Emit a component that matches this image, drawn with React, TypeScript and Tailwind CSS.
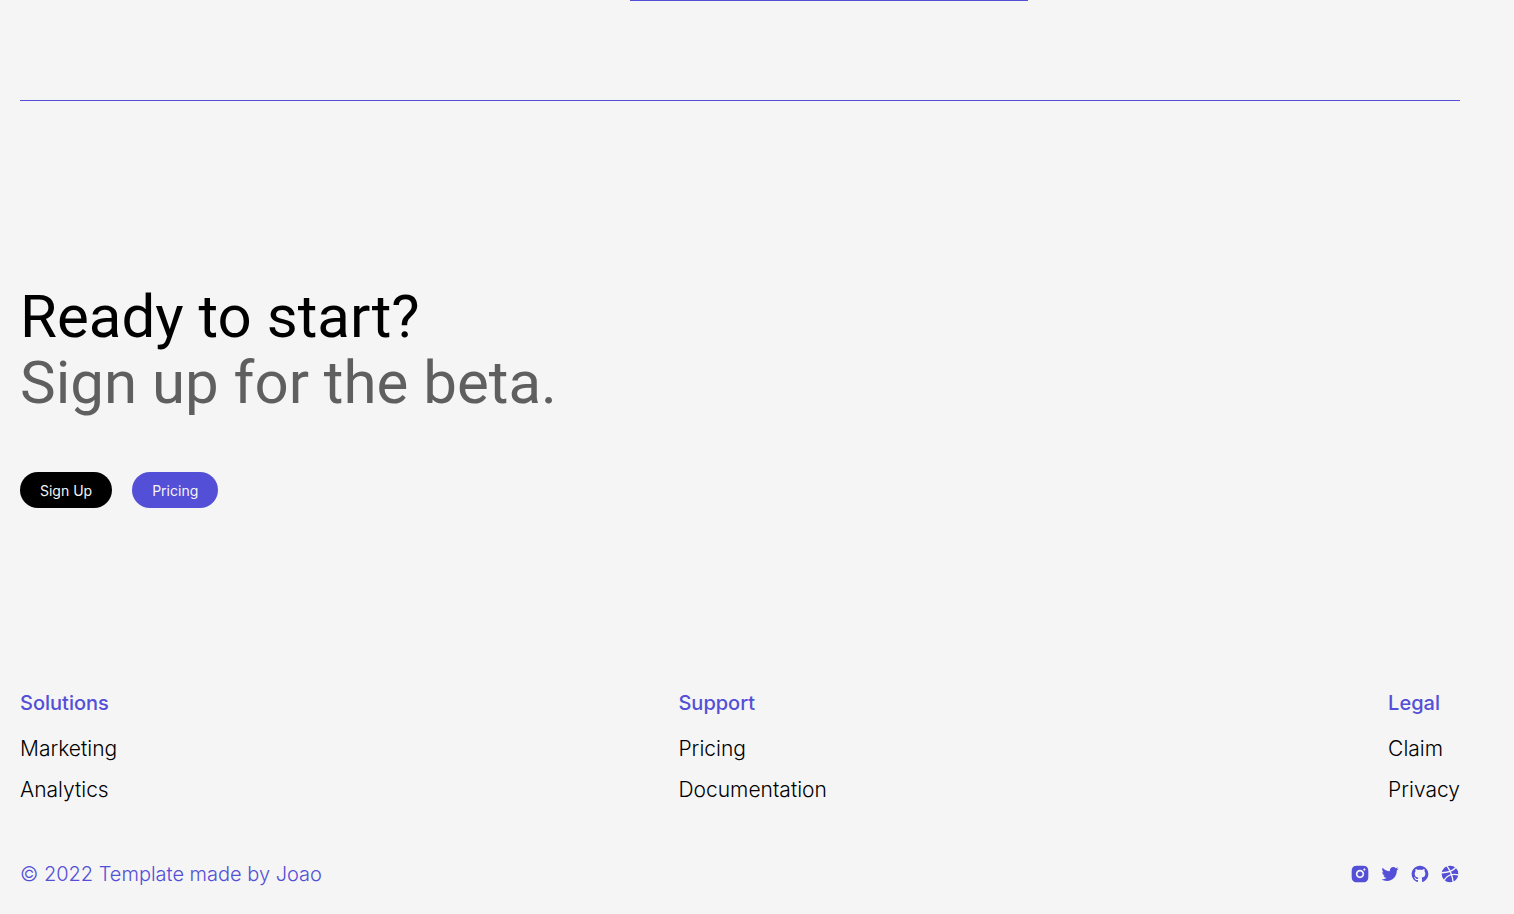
import React from 'react';
import { RiGithubFill, RiInstagramFill, RiTwitterFill } from 'react-icons/ri';

interface FooterColumn {
	title: string;
	links: string[];
}

const columns: FooterColumn[] = [
	{ title: 'Solutions', links: ['Marketing', 'Analytics'] },
	{ title: 'Support', links: ['Pricing', 'Documentation'] },
	{ title: 'Legal', links: ['Claim', 'Privacy'] },
];

// Solid ball with the seams cut out in the page colour
const DribbbleIcon: React.FC<{ className?: string }> = ({ className }) => (
	<svg viewBox="0 0 24 24" className={className} aria-hidden="true">
		<circle cx="12" cy="12" r="10" fill="currentColor" />
		<g fill="none" stroke="#f5f5f5" strokeWidth="1.7">
			<path d="M8 2c3.8 4.8 6.6 11 7.9 20" />
			<path d="M1.5 10.4c6.8.1 13.2-1 17.4-6.2" />
			<path d="M4.8 20c3.4-6.6 9.4-8.8 17.7-6.8" />
		</g>
	</svg>
);

const socials: { label: string; Icon: React.ComponentType<{ className?: string }> }[] = [
	{ label: 'Instagram', Icon: RiInstagramFill },
	{ label: 'Twitter', Icon: RiTwitterFill },
	{ label: 'GitHub', Icon: RiGithubFill },
	{ label: 'Dribbble', Icon: DribbbleIcon },
];

const CallToAction: React.FC = () => (
	<section className="pt-[183px] pb-[180px]">
		<h2 className="font-['Roboto',sans-serif] text-[60px] leading-[66px] text-black">
			Ready to start?
			<span className="block text-[#5f5f5f]">Sign up for the beta.</span>
		</h2>
		<div className="mt-14 flex gap-5">
			<button type="button" className="h-9 rounded-full bg-black px-5 text-[14px] text-[#f5f5f5]">Sign Up</button>
			<button type="button" className="h-9 rounded-full bg-[#534fd6] px-5 text-[14px] text-[#f5f5f5]">Pricing</button>
		</div>
	</section>
);

const Footer: React.FC = () => (
	<footer className="pb-6">
		<div className="flex justify-between">
			{columns.map(({ title, links }) => (
				<div key={title}>
					<h3 className="text-[20px] leading-[30px] font-medium text-[#534fd6]">{title}</h3>
					<ul className="mt-4 flex flex-col gap-[11px] text-[21px] leading-[30px] font-light text-black">
						{links.map((link) => (
							<li key={link}><a href="#">{link}</a></li>
						))}
					</ul>
				</div>
			))}
		</div>
		<div className="mt-[54px] flex items-center justify-between text-[#534fd6]">
			<p className="text-[20px] leading-[30px] font-light">© 2022 Template made by Joao</p>
			<div className="flex gap-[10px]">
				{socials.map(({ label, Icon }) => (
					<a key={label} href="#" aria-label={label}><Icon className="size-5" /></a>
				))}
			</div>
		</div>
	</footer>
);

export default function App() {
	return (
		<div className="min-h-screen bg-[#f5f5f5] px-5 font-['Inter',sans-serif]">
			<div className="max-w-[1440px]">
				{/* Bottom edge of the pricing card above */}
				<div className="flex justify-center pl-[178px]">
					<div className="h-px w-[398px] bg-[#534fd6]" />
				</div>
				<hr className="mt-[99px] border-t border-[#534fd6]" />
				<CallToAction />
				<Footer />
			</div>
		</div>
	);
}
